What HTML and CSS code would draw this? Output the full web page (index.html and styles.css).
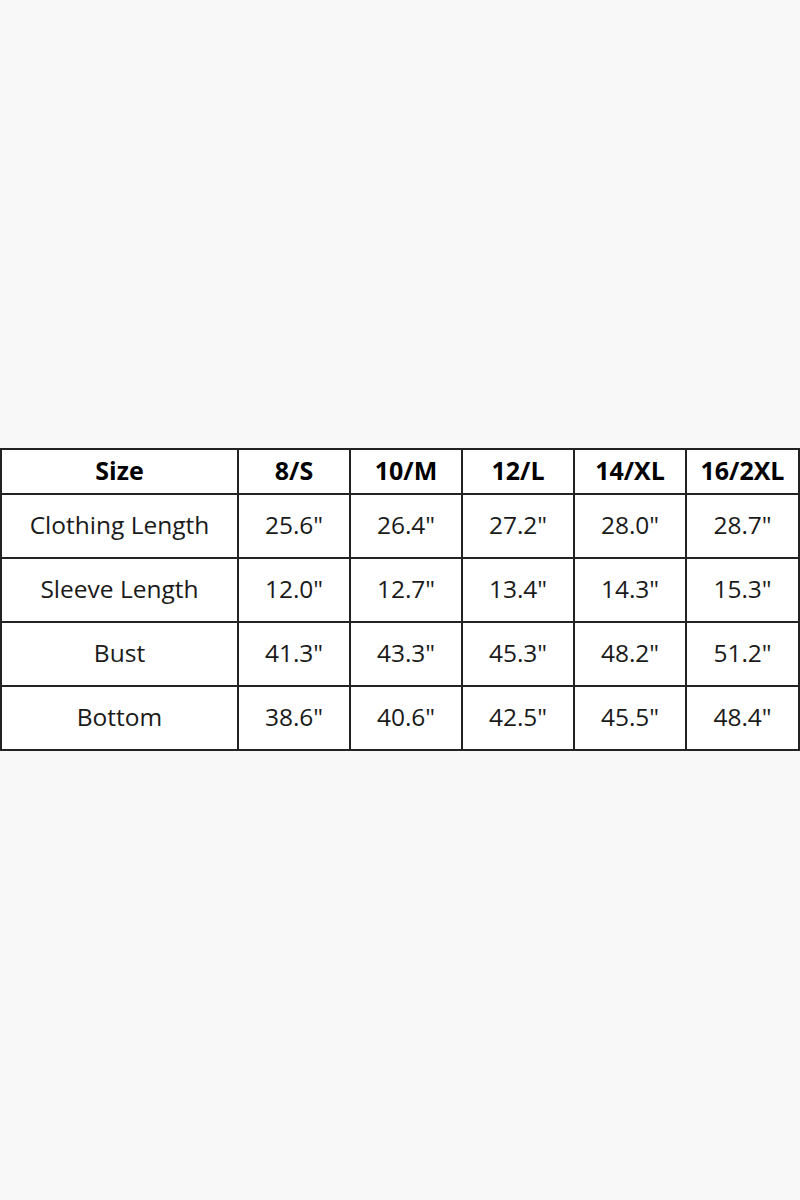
FILE: index.html
```html
<!DOCTYPE html>
<html>
<head>
<meta charset="utf-8">
<link rel="stylesheet" href="styles.css">
</head>
<body>
<div class="page">
  <table class="sizes">
    <colgroup>
      <col class="c-label">
      <col class="c-size"><col class="c-size"><col class="c-size"><col class="c-size"><col class="c-last">
    </colgroup>
    <thead>
      <tr><th>Size</th><th>8/S</th><th>10/M</th><th>12/L</th><th>14/XL</th><th>16/2XL</th></tr>
    </thead>
    <tbody>
      <tr><td>Clothing Length</td><td>25.6"</td><td>26.4"</td><td>27.2"</td><td>28.0"</td><td>28.7"</td></tr>
      <tr><td>Sleeve Length</td><td>12.0"</td><td>12.7"</td><td>13.4"</td><td>14.3"</td><td>15.3"</td></tr>
      <tr><td>Bust</td><td>41.3"</td><td>43.3"</td><td>45.3"</td><td>48.2"</td><td>51.2"</td></tr>
      <tr><td>Bottom</td><td>38.6"</td><td>40.6"</td><td>42.5"</td><td>45.5"</td><td>48.4"</td></tr>
    </tbody>
  </table>
</div>
</body>
</html>
```
FILE: styles.css
```css
html, body {
  margin: 0;
  padding: 0;
  background: #f8f8f8;
}
.page {
  height: 1200px;
  padding-top: 448px;
  box-sizing: border-box;
}
.sizes {
  border-collapse: collapse;
  width: 798px;
  table-layout: fixed;
  background: #ffffff;
  font-family: "Open Sans", "Noto Sans", sans-serif;
  color: #1a1a1a;
}
.c-label { width: 237px; }
.c-size { width: 112px; }
.c-last { width: 113px; }
.sizes th, .sizes td {
  border: 2px solid #222222;
  text-align: center;
  padding: 0 0 3px 0;
  line-height: 1.2;
}
.sizes th {
  height: 40px;
  font-size: 25px;
  font-weight: 700;
  color: #000;
}
.sizes td {
  height: 59px;
  font-size: 24.5px;
  font-weight: 400;
}
```
